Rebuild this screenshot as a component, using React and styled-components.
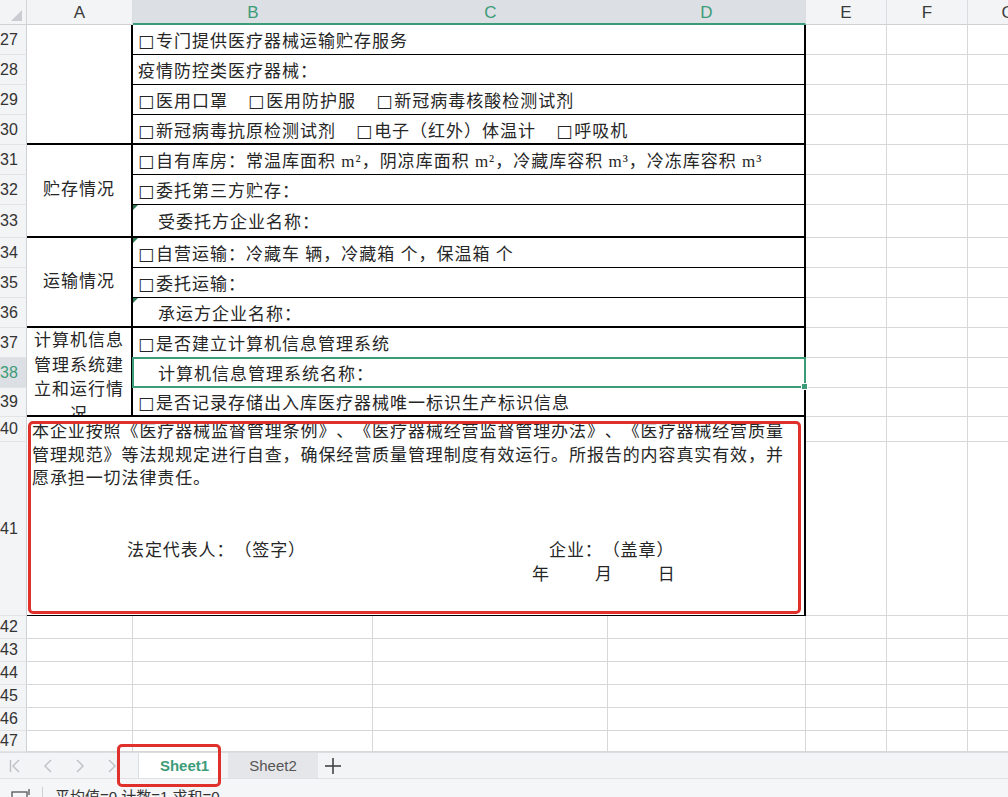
import React from 'react';
import styled, { createGlobalStyle, css } from 'styled-components';

/* Spreadsheet screenshot: self-inspection form (rows 27-47) */

const SERIF = `"Liberation Serif", "Noto Sans CJK SC", serif`;
const SANS = `"Liberation Sans", "Noto Sans CJK SC", sans-serif`;
const GREEN = '#3d9c78';
const GRID = '#d6d7d9';
const INK = '#262626';

const GlobalStyle = createGlobalStyle`
  html, body {
    margin: 0;
    padding: 0;
    background: #fff;
  }
  body {
    font-family: ${SANS};
    text-spacing-trim: space-all;
    font-kerning: none;
  }
`;

const Screen = styled.div`
  width: 1008px;
  height: 797px;
  overflow: hidden;
  display: flex;
  flex-direction: column;
  background: #fff;
`;

const Sheet = styled.div`
  flex: none;
  display: grid;
  grid-template-columns: 27px 106px 240px 235px 198px 81px 81px 81px;
  grid-template-rows: 25px repeat(6, 30px) 33px repeat(5, 30px) 29px 25px 174px repeat(5, 23px) 21px;
  height: 752px;
  overflow: hidden;
`;

const Corner = styled.div`
  grid-row: 1;
  grid-column: 1;
  position: relative;
  background: #f3f4f6;
  border-right: 1px solid #d3d4d6;
  border-bottom: 1px solid #cfd0d2;
  box-sizing: border-box;
  &::after {
    content: '';
    position: absolute;
    right: 4px;
    bottom: 3px;
    border-left: 11px solid transparent;
    border-bottom: 11px solid #c9ccd1;
  }
`;

const ColHead = styled.div`
  grid-row: 1;
  grid-column: ${(p) => p.$c};
  display: flex;
  align-items: center;
  justify-content: center;
  box-sizing: border-box;
  padding-top: 2px;
  font: 17px ${SANS};
  background: ${(p) => (p.$active ? '#dcdfe3' : '#f3f4f6')};
  color: ${(p) => (p.$active ? GREEN : '#3a3a3a')};
  border-right: ${(p) => (p.$active && !p.$last ? 'none' : '1px solid #dcdde0')};
  border-bottom: ${(p) => (p.$active ? `2px solid ${GREEN}` : '1px solid #cfd0d2')};
`;

const RowHead = styled.div`
  grid-row: ${(p) => p.$r} / span ${(p) => p.$rs || 1};
  grid-column: 1;
  display: flex;
  align-items: center;
  box-sizing: border-box;
  font: 16px ${SANS};
  background: ${(p) => (p.$active ? '#dcdfe3' : '#f3f4f6')};
  color: ${(p) => (p.$active ? GREEN : '#333')};
  border-right: 1px solid #cfd0d2;
  border-bottom: 1px solid #e2e3e5;
  overflow: hidden;
`;

const Blank = styled.div`
  grid-row: ${(p) => p.$r};
  grid-column: ${(p) => p.$c};
  box-sizing: border-box;
  border-right: 1px solid ${GRID};
  border-bottom: 1px solid ${GRID};
`;

const LabelCell = styled.div`
  grid-row: ${(p) => p.$r} / span ${(p) => p.$rs};
  grid-column: 2;
  box-sizing: border-box;
  display: flex;
  flex-direction: column;
  align-items: center;
  justify-content: ${(p) => (p.$top ? 'flex-start' : 'center')};
  padding: ${(p) => (p.$top ? '1px 5px 0' : '0 5px')};
  text-align: center;
  font: 17px ${SERIF};
  line-height: 24.5px;
  letter-spacing: 1px;
  color: ${INK};
  border-right: 2px solid #000;
  border-bottom: 2px solid #000;
  overflow: hidden;
`;

const FormCell = styled.div`
  grid-row: ${(p) => p.$r};
  grid-column: 3 / span 3;
  position: relative;
  box-sizing: border-box;
  display: flex;
  align-items: center;
  gap: 20px;
  padding-left: ${(p) => (p.$indent ? '25px' : '5px')};
  font: 17px ${SERIF};
  letter-spacing: 1px;
  color: ${INK};
  white-space: nowrap;
  border-right: 2px solid #000;
  border-bottom: ${(p) => (p.$thick ? '2px' : '1px')} solid #000;
  ${(p) =>
    p.$mark &&
    css`
      &::before {
        content: '';
        position: absolute;
        left: 0;
        top: 0;
        border-top: 5px solid #2f7a55;
        border-right: 5px solid transparent;
      }
    `}
`;

const Box = styled.span`
  font-family: "DejaVu Sans", sans-serif;
  font-size: 17px;
  letter-spacing: 2px;
`;

const Selection = styled.div`
  position: absolute;
  top: -1px;
  left: -1px;
  right: -2px;
  bottom: -1px;
  border: 2px solid ${GREEN};
  z-index: 3;
  &::after {
    content: '';
    position: absolute;
    right: -4px;
    bottom: -4px;
    width: 5px;
    height: 5px;
    background: ${GREEN};
    border: 1px solid #fff;
  }
`;

const NoticeCell = styled.div`
  grid-row: 15 / span 2;
  grid-column: 2 / span 4;
  position: relative;
  box-sizing: border-box;
  padding: 3px 0 0 5px;
  font: 17px ${SERIF};
  line-height: 23.5px;
  letter-spacing: 0.9px;
  color: ${INK};
  border-right: 2px solid #000;
  border-bottom: 1px solid #000;
`;

const Line = styled.div`
  white-space: nowrap;
`;

const SignRow = styled.div`
  display: flex;
  margin-top: 48px;
  padding-left: 95px;
  line-height: 24px;
`;

const SignLeft = styled.span`
  flex: 0 0 422px;
`;

const DateRow = styled.div`
  display: flex;
  gap: 45px;
  padding-left: 500px;
  line-height: 24px;
`;

const RedMark = styled.div`
  position: absolute;
  top: ${(p) => p.$top}px;
  left: ${(p) => p.$left}px;
  right: ${(p) => p.$right}px;
  bottom: ${(p) => p.$bottom}px;
  border: 3px solid #e0302c;
  border-radius: 5px;
  z-index: 5;
  pointer-events: none;
`;

const TabBar = styled.div`
  flex: none;
  height: 26px;
  display: flex;
  align-items: stretch;
  background: #f3f4f6;
  border-top: 1px solid #dcdde0;
  box-sizing: border-box;
`;

const NavButton = styled.div`
  width: 32px;
  display: flex;
  align-items: center;
  justify-content: center;
  color: #bdbfc3;
`;

const NavGroup = styled.div`
  display: flex;
  width: 138px;
`;

const Tab = styled.div`
  position: relative;
  width: ${(p) => p.$w}px;
  display: flex;
  align-items: center;
  justify-content: center;
  box-sizing: border-box;
  font: ${(p) => (p.$active ? 'bold' : 'normal')} 15px ${SANS};
  color: ${(p) => (p.$active ? GREEN : '#555')};
  background: ${(p) => (p.$active ? '#fff' : '#e5e6e9')};
  border-left: ${(p) => (p.$active ? '1px solid #dcdde0' : 'none')};
  margin-right: ${(p) => (p.$active ? '10px' : '0')};
  padding-left: ${(p) => (p.$active ? '12px' : '0')};
`;

const AddButton = styled.div`
  width: 30px;
  display: flex;
  align-items: center;
  justify-content: center;
  color: #444;
`;

const StatusBar = styled.div`
  flex: 1;
  display: flex;
  align-items: flex-start;
  background: #f5f6f7;
  border-top: 1px solid #e0e1e3;
  padding-top: 6px;
  font: 15px ${SANS};
  color: #333;
`;

const StatusIcon = styled.div`
  width: 42px;
  display: flex;
  justify-content: center;
  padding-top: 3px;
  color: #555;
`;

const Divider = styled.div`
  width: 1px;
  height: 16px;
  margin-top: 2px;
  background: #cfd0d2;
  margin-right: 12px;
`;

const COLS = ['A', 'B', 'C', 'D', 'E', 'F', 'G'];
const gridRow = (n) => n - 25;

const formRows = [
  { n: 27, items: ['专门提供医疗器械运输贮存服务'], box: true },
  { n: 28, items: ['疫情防控类医疗器械：'] },
  { n: 29, items: ['医用口罩', '医用防护服', '新冠病毒核酸检测试剂'], box: true },
  { n: 30, items: ['新冠病毒抗原检测试剂', '电子（红外）体温计', '呼吸机'], box: true, thick: true },
  { n: 31, items: ['自有库房：常温库面积 m²，阴凉库面积 m²，冷藏库容积 m³，冷冻库容积 m³'], box: true },
  { n: 32, items: ['委托第三方贮存：'], box: true },
  { n: 33, items: ['受委托方企业名称：'], indent: true, mark: true, thick: true },
  { n: 34, items: ['自营运输：冷藏车 辆，冷藏箱 个，保温箱 个'], box: true, mark: true },
  { n: 35, items: ['委托运输：'], box: true },
  { n: 36, items: ['承运方企业名称：'], indent: true, mark: true, thick: true },
  { n: 37, items: ['是否建立计算机信息管理系统'], box: true },
  { n: 38, items: ['计算机信息管理系统名称：'], indent: true, selected: true },
  { n: 39, items: ['是否记录存储出入库医疗器械唯一标识生产标识信息'], box: true, thick: true },
];

const rowNums = Array.from({ length: 21 }, (_, i) => 27 + i);

function Chevron({ dir, bar }) {
  const pts = dir === 'left' ? '10,2 4,8 10,14' : '4,2 10,8 4,14';
  return (
    <svg width="14" height="16" viewBox="0 0 14 16" fill="none" stroke="currentColor" strokeWidth="1.4">
      {bar === 'left' && <line x1="1.5" y1="2" x2="1.5" y2="14" />}
      <polyline points={pts} />
      {bar === 'right' && <line x1="12.5" y1="2" x2="12.5" y2="14" />}
    </svg>
  );
}

function App() {
  return (
    <Screen>
      <GlobalStyle />
      <Sheet>
        <Corner />
        {COLS.map((c, i) => (
          <ColHead key={c} $c={i + 2} $active={i >= 1 && i <= 3} $last={i === 3}>
            {c}
          </ColHead>
        ))}

        {rowNums.map((n) => (
          <RowHead key={n} $r={gridRow(n)} $active={n === 38}>
            {n}
          </RowHead>
        ))}

        {/* column A group labels */}
        <LabelCell $r={2} $rs={4} />
        <LabelCell $r={6} $rs={3}>贮存情况</LabelCell>
        <LabelCell $r={9} $rs={3}>运输情况</LabelCell>
        <LabelCell $r={12} $rs={3} $top>
          计算机信息管理系统建立和运行情况
        </LabelCell>

        {formRows.map((row) => (
          <FormCell
            key={row.n}
            $r={gridRow(row.n)}
            $indent={row.indent}
            $thick={row.thick}
            $mark={row.mark}
          >
            {row.items.map((t) => (
              <span key={t}>
                {row.box && <Box>□</Box>}
                {t}
              </span>
            ))}
            {row.selected && <Selection />}
          </FormCell>
        ))}

        <NoticeCell>
          <Line>本企业按照《医疗器械监督管理条例》、《医疗器械经营监督管理办法》、《医疗器械经营质量</Line>
          <Line>管理规范》等法规规定进行自查，确保经营质量管理制度有效运行。所报告的内容真实有效，并</Line>
          <Line>愿承担一切法律责任。</Line>
          <SignRow>
            <SignLeft>法定代表人：（签字）</SignLeft>
            <span>企业：（盖章）</span>
          </SignRow>
          <DateRow>
            <span>年</span>
            <span>月</span>
            <span>日</span>
          </DateRow>
          <RedMark $top={4} $left={1} $right={3} $bottom={1} />
        </NoticeCell>

        {/* empty cells E-G beside the form */}
        {rowNums.map((n) =>
          [6, 7, 8].map((c) => <Blank key={`${n}-${c}`} $r={gridRow(n)} $c={c} />)
        )}
        {/* empty cells A-D below the form */}
        {rowNums
          .filter((n) => n >= 42)
          .map((n) => [2, 3, 4, 5].map((c) => <Blank key={`${n}-${c}`} $r={gridRow(n)} $c={c} />))}
      </Sheet>

      <TabBar>
        <NavGroup>
          <NavButton>
            <Chevron dir="left" bar="left" />
          </NavButton>
          <NavButton>
            <Chevron dir="left" />
          </NavButton>
          <NavButton>
            <Chevron dir="right" />
          </NavButton>
          <NavButton>
            <Chevron dir="right" bar="right" />
          </NavButton>
        </NavGroup>
        <Tab $w={80} $active>
          Sheet1
          <RedMark $top={-9} $left={-22} $right={-3} $bottom={-9} />
        </Tab>
        <Tab $w={90}>Sheet2</Tab>
        <AddButton>
          <svg width="20" height="20" viewBox="0 0 20 20" stroke="currentColor" strokeWidth="1.6">
            <line x1="10" y1="2" x2="10" y2="18" />
            <line x1="2" y1="10" x2="18" y2="10" />
          </svg>
        </AddButton>
      </TabBar>

      <StatusBar>
        <StatusIcon>
          <svg width="22" height="16" viewBox="0 0 22 16" fill="none" stroke="currentColor" strokeWidth="1.3">
            <rect x="2" y="4" width="15" height="12" />
            <line x1="19" y1="1" x2="19" y2="7" />
          </svg>
        </StatusIcon>
        <Divider />
        <span>平均值=0 计数=1 求和=0</span>
      </StatusBar>
    </Screen>
  );
}

export default App;
